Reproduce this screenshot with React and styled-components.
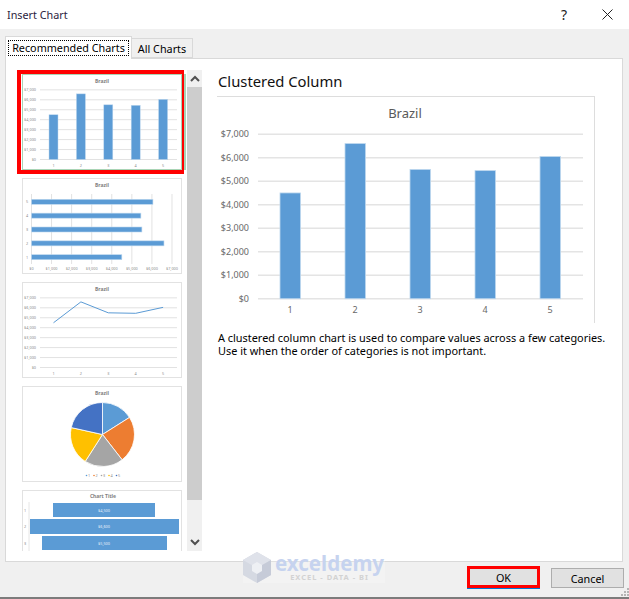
import React from 'react';
import styled, { createGlobalStyle } from 'styled-components';

const FONT = '"Noto Sans", "Open Sans", sans-serif';

const values = [4500, 6600, 5500, 5450, 6050];
const axisLabels = ['$0', '$1,000', '$2,000', '$3,000', '$4,000', '$5,000', '$6,000', '$7,000'];
const pieColors = ['#5b9bd5', '#ed7d31', '#a5a5a5', '#ffc000', '#4472c4'];

const ThumbFrame = ({ children }) => (
  <ThumbSvg viewBox="0 0 158 94">{children}</ThumbSvg>
);

// small vertical axis + gridlines, shared by the column and line thumbnails
const ThumbGrid = () => (
  <g>
    <ThumbTitle x="79" y="7.5">Brazil</ThumbTitle>
    {axisLabels.map((label, i) => {
      const y = 84.5 - i * 9.95;
      return (
        <g key={label}>
          <line x1="17" x2="154" y1={y} y2={y} stroke="#e2e2e2" strokeWidth="1" />
          <ThumbLabel x="13" y={y + 1.5} textAnchor="end">{label}</ThumbLabel>
        </g>
      );
    })}
    {values.map((v, i) => (
      <ThumbLabel key={i} x={30.5 + i * 27.4} y="92" textAnchor="middle">{i + 1}</ThumbLabel>
    ))}
  </g>
);

const ColumnThumb = () => (
  <ThumbFrame>
    <ThumbGrid />
    {values.map((v, i) => {
      const h = (v / 7000) * 69.6;
      return (
        <rect key={i} x={26 + i * 27.4} y={84.5 - h} width="9" height={h} fill="#5b9bd5" stroke="#bdd7ee" strokeWidth="0.5" />
      );
    })}
  </ThumbFrame>
);

const BarThumb = () => (
  <ThumbFrame>
    <ThumbTitle x="79" y="7.5">Brazil</ThumbTitle>
    {axisLabels.map((label, i) => {
      const x = 8.5 + i * 20.07;
      return (
        <g key={label}>
          <line x1={x} x2={x} y1="15" y2="85" stroke="#e2e2e2" strokeWidth="1" />
          <ThumbLabel x={x} y="91" textAnchor="middle">{label}</ThumbLabel>
        </g>
      );
    })}
    {values.map((v, i) => {
      const y = 78.7 - i * 13.85;
      return (
        <g key={i}>
          <rect x="8.5" y={y - 3} width={(v / 7000) * 140.5} height="5" fill="#5b9bd5" stroke="#bdd7ee" strokeWidth="0.6" />
          <ThumbLabel x="4" y={y + 1} textAnchor="middle">{i + 1}</ThumbLabel>
        </g>
      );
    })}
  </ThumbFrame>
);

const LineThumb = () => (
  <ThumbFrame>
    <ThumbGrid />
    <polyline
      fill="none"
      stroke="#5b9bd5"
      strokeWidth="1"
      points={values.map((v, i) => `${30.5 + i * 27.4},${84.5 - (v / 7000) * 69.6}`).join(' ')}
    />
  </ThumbFrame>
);

const PieThumb = () => {
  const total = values.reduce((a, b) => a + b, 0);
  const cx = 79.5;
  const cy = 47.5;
  const r = 32;
  let start = 0;
  const slices = values.map((v, i) => {
    const end = start + (v / total) * Math.PI * 2;
    const x1 = cx + r * Math.sin(start);
    const y1 = cy - r * Math.cos(start);
    const x2 = cx + r * Math.sin(end);
    const y2 = cy - r * Math.cos(end);
    const d = `M${cx} ${cy}L${x1} ${y1}A${r} ${r} 0 0 1 ${x2} ${y2}Z`;
    start = end;
    return <path key={i} d={d} fill={pieColors[i]} stroke="#fff" strokeWidth="0.8" />;
  });
  return (
    <ThumbFrame>
      <ThumbTitle x="79" y="7.5">Brazil</ThumbTitle>
      {slices}
      {values.map((v, i) => (
        <g key={i}>
          <circle cx={63.5 + i * 7.5} cy="88.5" r="0.8" fill={pieColors[i]} />
          <ThumbLabel x={65 + i * 7.5} y="90">{i + 1}</ThumbLabel>
        </g>
      ))}
    </ThumbFrame>
  );
};

const FunnelThumb = () => {
  const rows = [
    { x: 30, w: 102, y: 12, h: 14, label: '$4,500' },
    { x: 7, w: 149, y: 28, h: 15, label: '$6,600' },
    { x: 19, w: 125, y: 45, h: 14, label: '$5,500' },
  ];
  return (
    <ThumbFrame>
      <ThumbTitle x="80" y="7">Chart Title</ThumbTitle>
      <line x1="6" x2="6" y1="11" y2="62" stroke="#e6e6e6" strokeWidth="1" />
      {rows.map((row, i) => (
        <g key={row.label}>
          <ThumbLabel x="2" y={row.y + row.h / 2 + 1.5} textAnchor="middle">{i + 1}</ThumbLabel>
          <rect x={row.x} y={row.y} width={row.w} height={row.h} fill="#5b9bd5" />
          <ThumbLabel $light x="81" y={row.y + row.h / 2 + 1.5} textAnchor="middle">{row.label}</ThumbLabel>
        </g>
      ))}
    </ThumbFrame>
  );
};

const PreviewChart = () => (
  <svg viewBox="217 97 377 226" width="377" height="226" style={{ display: 'block' }}>
    <PreviewTitle x="405" y="118" textAnchor="middle">Brazil</PreviewTitle>
    {axisLabels.map((label, i) => {
      const y = 298.7 - i * 23.5;
      return (
        <g key={label}>
          <line x1="258" x2="583" y1={y} y2={y} stroke="#e4e4e4" strokeWidth="1.4" />
          <PreviewLabel x="249" y={y + 3} textAnchor="end">{label}</PreviewLabel>
        </g>
      );
    })}
    {values.map((v, i) => {
      const h = (v / 7000) * 164.5;
      return (
        <g key={i}>
          <rect x={280 + i * 65} y={298.7 - h} width="20.5" height={h} fill="#5b9bd5" stroke="#bdd7ee" strokeWidth="0.8" />
          <PreviewLabel x={290 + i * 65} y="313" textAnchor="middle">{i + 1}</PreviewLabel>
        </g>
      );
    })}
  </svg>
);

const App = () => (
  <>
    <GlobalStyle />
    <Dialog>
      <TitleBar>
        <TitleText>Insert Chart</TitleText>
        <TitleActions>
          <HelpMark>?</HelpMark>
          <svg width="11" height="11" viewBox="0 0 11 11">
            <path d="M0.5 0.5L10.5 10.5M10.5 0.5L0.5 10.5" stroke="#222" strokeWidth="1" fill="none" />
          </svg>
        </TitleActions>
      </TitleBar>

      <Body>
        <TabStrip>
          <Tab $active><TabFocus>Recommended Charts</TabFocus></Tab>
          <Tab>All Charts</Tab>
        </TabStrip>

        <Panel>
          <ThumbColumn>
            <ThumbList>
              <Thumb $selected><ColumnThumb /></Thumb>
              <Thumb><BarThumb /></Thumb>
              <Thumb><LineThumb /></Thumb>
              <Thumb><PieThumb /></Thumb>
              <Thumb><FunnelThumb /></Thumb>
            </ThumbList>
            <ScrollBar>
              <ScrollButton>
                <svg width="10" height="7" viewBox="0 0 10 7">
                  <polyline points="1,6 5,2 9,6" fill="none" stroke="#505050" strokeWidth="2" />
                </svg>
              </ScrollButton>
              <ScrollThumb />
              <ScrollTrack />
              <ScrollButton>
                <svg width="10" height="7" viewBox="0 0 10 7">
                  <polyline points="1,1 5,5 9,1" fill="none" stroke="#505050" strokeWidth="2" />
                </svg>
              </ScrollButton>
            </ScrollBar>
          </ThumbColumn>

          <Preview>
            <Heading>Clustered Column</Heading>
            <ChartBox>
              <PreviewChart />
            </ChartBox>
            <Description>
              A clustered column chart is used to compare values across a few categories.
              <br />
              Use it when the order of categories is not important.
            </Description>
          </Preview>
        </Panel>

        <Footer>
          <Watermark>
            <svg width="28" height="31" viewBox="0 0 28 31">
              <path d="M14 0L28 8V23L14 31L0 23V8Z" fill="#d5d9e2" />
              <path d="M14 0L28 8L14 16L0 8Z" fill="#dfe2ea" />
              <path d="M14 16V31L28 23V8Z" fill="#c6cbd8" />
              <path d="M9 13L14 10L19 13V19L14 22L9 19Z" fill="#eef0f4" />
            </svg>
            <WatermarkText>
              <WatermarkName>exceldemy</WatermarkName>
              <WatermarkTag>EXCEL - DATA - BI</WatermarkTag>
            </WatermarkText>
          </Watermark>
          <DialogButton $marked>OK</DialogButton>
          <DialogButton>Cancel</DialogButton>
          <Grip width="9" height="9" viewBox="0 0 9 9">
            <g fill="#b5b5b5">
              <rect x="6" y="0" width="2" height="2" />
              <rect x="3" y="3" width="2" height="2" />
              <rect x="6" y="3" width="2" height="2" />
              <rect x="0" y="6" width="2" height="2" />
              <rect x="3" y="6" width="2" height="2" />
              <rect x="6" y="6" width="2" height="2" />
            </g>
          </Grip>
        </Footer>
      </Body>
    </Dialog>
  </>
);

const GlobalStyle = createGlobalStyle`
  html, body {
    margin: 0;
    padding: 0;
    background: #f0f0f0;
    font-family: ${FONT};
  }
`;

const Dialog = styled.div`
  width: 629px;
  height: 599px;
  display: flex;
  flex-direction: column;
  box-sizing: border-box;
  border-bottom: 2px solid #7c7c7c;
  overflow: hidden;
`;

const TitleBar = styled.div`
  height: 29px;
  flex: none;
  background: #fff;
  display: flex;
  align-items: center;
  justify-content: space-between;
  padding: 0 16px 0 7px;
`;

const TitleText = styled.div`
  font-size: 10.8px;
  color: #2b2340;
`;

const TitleActions = styled.div`
  display: flex;
  align-items: center;
  gap: 35px;
`;

const HelpMark = styled.span`
  font-size: 14px;
  color: #222;
`;

const Body = styled.div`
  flex: 1;
  display: flex;
  flex-direction: column;
  padding: 7px 6px 0 5px;
  min-height: 0;
`;

const TabStrip = styled.div`
  display: flex;
  align-items: flex-end;
  height: 22px;
  flex: none;
`;

const Tab = styled.div`
  box-sizing: border-box;
  font-size: 10.8px;
  color: #000;
  border: 1px solid #d9d9d9;
  background: ${({ $active }) => ($active ? '#fff' : '#f0f0f0')};
  height: ${({ $active }) => ($active ? '23px' : '20px')};
  width: ${({ $active }) => ($active ? '127px' : '61px')};
  border-bottom: ${({ $active }) => ($active ? 'none' : '1px solid #d9d9d9')};
  margin-bottom: ${({ $active }) => ($active ? '-1px' : '0')};
  border-left: ${({ $active }) => ($active ? '1px solid #d9d9d9' : 'none')};
  display: flex;
  align-items: center;
  justify-content: center;
  position: relative;
  z-index: ${({ $active }) => ($active ? 1 : 0)};
`;

const TabFocus = styled.span`
  border: 1px dotted #000;
  padding: 0 3px;
  line-height: 14px;
  white-space: nowrap;
`;

const Panel = styled.div`
  height: 504px;
  flex: none;
  box-sizing: border-box;
  background: #fff;
  border: 1px solid #d9d9d9;
  display: flex;
`;

const ThumbColumn = styled.div`
  display: flex;
  padding: 11px 0 10px 11px;
  height: 502px;
  box-sizing: border-box;
  flex: none;
`;

const ThumbList = styled.div`
  width: 170px;
  box-sizing: border-box;
  padding: 4px 0 0 5px;
  display: flex;
  flex-direction: column;
  gap: 8px;
  overflow: hidden;
`;

const Thumb = styled.div`
  position: relative;
  width: 160px;
  height: 96px;
  flex: none;
  box-sizing: border-box;
  border: 1px solid #e2e2e2;
  background: #fff;
  ${({ $selected }) =>
    $selected &&
    `
    border-color: #a9d4b5;
    &::before {
      content: '';
      position: absolute;
      top: -1px;
      bottom: -1px;
      right: -5px;
      width: 4px;
      background: #a9d4b5;
    }
    &::after {
      content: '';
      position: absolute;
      top: -5px;
      left: -6px;
      right: -3px;
      bottom: -5px;
      border: 4px solid #f00;
      border-right-width: 2px;
    }
  `}
`;

const ThumbSvg = styled.svg`
  display: block;
  width: 158px;
  height: 94px;
`;

const ThumbTitle = styled.text`
  font-family: ${FONT};
  font-size: 5px;
  font-weight: 700;
  fill: #7f7f7f;
  text-anchor: middle;
`;

const ThumbLabel = styled.text`
  font-family: ${FONT};
  font-size: 3.8px;
  fill: ${({ $light }) => ($light ? '#e8f1fa' : '#8a8a8a')};
`;

const ScrollBar = styled.div`
  width: 15px;
  flex: none;
  display: flex;
  flex-direction: column;
  background: #f0f0f0;
`;

const ScrollButton = styled.div`
  height: 17px;
  flex: none;
  display: flex;
  align-items: center;
  justify-content: center;
`;

const ScrollThumb = styled.div`
  height: 413px;
  flex: none;
  background: #cdcdcd;
`;

const ScrollTrack = styled.div`
  flex: 1;
`;

const Preview = styled.div`
  flex: 1;
  padding: 11px 0 0 15px;
`;

const Heading = styled.div`
  font-size: 14.8px;
  line-height: 22px;
  color: #111;
  padding-left: 1px;
  margin-bottom: 4px;
`;

const ChartBox = styled.div`
  width: 378px;
  height: 227px;
  box-sizing: border-box;
  border-top: 1px solid #ddd;
  border-right: 1px solid #ddd;
`;

const PreviewTitle = styled.text`
  font-family: ${FONT};
  font-size: 13px;
  fill: #595959;
`;

const PreviewLabel = styled.text`
  font-family: ${FONT};
  font-size: 9px;
  fill: #686868;
`;

const Description = styled.div`
  margin: 8px 0 0 1px;
  font-size: 10.9px;
  line-height: 13px;
  color: #000;
  white-space: nowrap;
`;

const Footer = styled.div`
  position: relative;
  flex: 1;
  display: flex;
  justify-content: flex-end;
  align-items: flex-start;
  gap: 11px;
  padding-top: 4px;
  margin-right: -1px;
`;

const DialogButton = styled.div`
  box-sizing: border-box;
  width: 73px;
  height: ${({ $marked }) => ($marked ? '22px' : '20px')};
  margin-top: ${({ $marked }) => ($marked ? '0' : '2px')};
  background: #e1e1e1;
  border: ${({ $marked }) => ($marked ? '3px solid #f00' : '1px solid #adadad')};
  box-shadow: ${({ $marked }) => ($marked ? '0 1px 0 #0078d7' : 'none')};
  font-size: 10.8px;
  color: #000;
  display: flex;
  align-items: center;
  justify-content: center;
`;

const Grip = styled.svg`
  position: absolute;
  right: -6px;
  bottom: 0;
`;

const Watermark = styled.div`
  position: absolute;
  left: 238px;
  top: -10px;
  width: 142px;
  height: 31px;
  display: flex;
  align-items: center;
  gap: 4px;
  background: rgba(255, 255, 255, 0.22);
`;

const WatermarkText = styled.div`
  display: flex;
  flex-direction: column;
  align-items: center;
`;

const WatermarkName = styled.div`
  font-size: 20.5px;
  line-height: 18px;
  font-weight: 700;
  color: #c6d3ef;
`;

const WatermarkTag = styled.div`
  font-size: 7.5px;
  line-height: 10px;
  font-weight: 700;
  letter-spacing: 1px;
  color: #d2d2d2;
`;

export default App;
